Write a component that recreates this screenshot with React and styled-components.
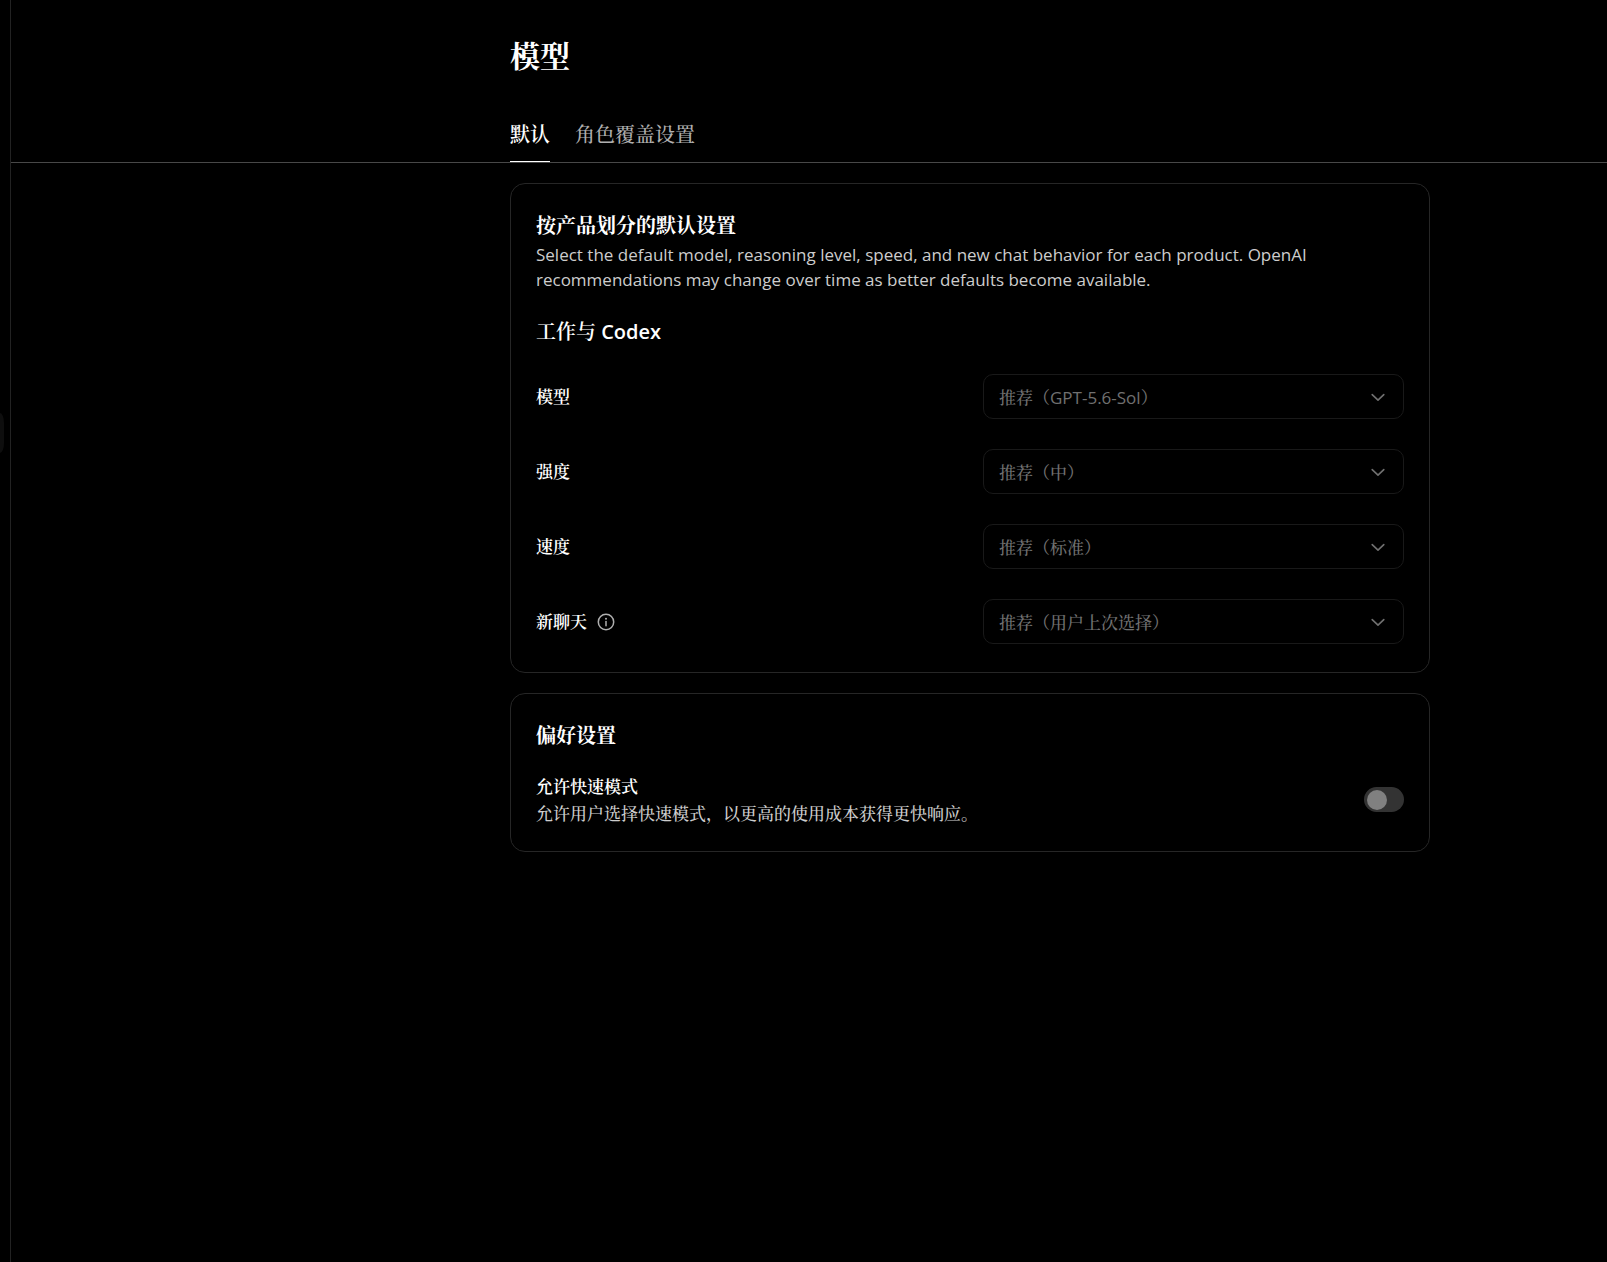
import React, { useState } from "react";
import styled, { createGlobalStyle } from "styled-components";

const GlobalStyle = createGlobalStyle`
  *, *::before, *::after { box-sizing: border-box; }
  html { background: #000; }
  body {
    margin: 0;
    background: #000;
    color: #fff;
    font-family: "Open Sans", "Noto Serif CJK SC", "Noto Sans CJK SC", sans-serif;
  }
  h1, h2, h3, p { margin: 0; }
  button, select { font-family: inherit; }
`;

const Page = styled.div`
  display: flex;
  min-height: 100vh;
`;

const Rail = styled.aside`
  display: flex;
  flex: none;
  align-items: flex-start;
  width: 11px;
  padding-top: 413px;
  border-right: 1px solid #222;
`;

const RailHandle = styled.button`
  width: 4px;
  height: 40px;
  padding: 0;
  border: 0;
  border-radius: 0 4px 4px 0 / 0 10px 10px 0;
  background: #0e0e0e;
`;

const Main = styled.main`
  flex: 1;
  min-width: 0;
`;

const Band = styled.div`
  padding-left: 322px;
  border-bottom: ${(p) => (p.$ruled ? "1px solid #484848" : "0")};
`;

const Column = styled.div`
  display: flex;
  flex-direction: column;
  gap: ${(p) => p.$gap}px;
  max-width: 920px;
  margin: 0 auto;
  padding-top: ${(p) => p.$top}px;
`;

const PageTitle = styled.h1`
  font-size: 30px;
  font-weight: 700;
  line-height: 40px;
`;

const Tabs = styled.nav`
  display: flex;
  gap: 25px;
`;

const Tab = styled.button`
  height: 54px;
  padding: 0;
  border: 0;
  border-bottom: 1px solid ${(p) => (p.$active ? "#fff" : "transparent")};
  background: none;
  color: ${(p) => (p.$active ? "#fff" : "#afafaf")};
  font-size: 20px;
  font-weight: ${(p) => (p.$active ? 600 : 500)};
  line-height: 30px;
`;

const Card = styled.section`
  padding: 27px 25px ${(p) => p.$bottom}px;
  border: 1px solid #262626;
  border-radius: 15px;
`;

const Title = styled.h2`
  font-size: 20px;
  font-weight: 700;
  line-height: 30px;
`;

const Subtitle = styled.h3`
  margin: 25px 0 27px;
  font-size: 20px;
  font-weight: 600;
  line-height: 30px;
`;

const Intro = styled.p`
  max-width: 780px;
  margin-top: 1px;
  color: #cdcdcd;
  font-size: 17px;
  line-height: 25px;
`;

const Fields = styled.div`
  display: grid;
  gap: 30px;
`;

const Field = styled.div`
  display: grid;
  grid-template-columns: 1fr 1fr;
  gap: 26px;
  align-items: center;
`;

const LabelGroup = styled.div`
  display: flex;
  align-items: center;
  gap: 10px;
`;

const Label = styled.label`
  display: block;
  font-size: 17px;
  font-weight: 600;
  line-height: 28px;
`;

const InfoButton = styled.button`
  display: flex;
  padding: 0;
  border: 0;
  background: none;
  color: #afafaf;
`;

const SelectBox = styled.div`
  display: grid;
  align-items: center;
  color: #707070;

  & > * { grid-area: 1 / 1; }
  & > svg {
    justify-self: end;
    margin-right: 16px;
    pointer-events: none;
  }
`;

const Select = styled.select`
  width: 100%;
  height: 45px;
  padding: 1px 45px 0 15px;
  appearance: none;
  border: 1px solid #191919;
  border-radius: 10px;
  background: #000;
  color: inherit;
  font-size: 17px;
  font-weight: 500;
  opacity: 1;
`;

const Preference = styled.div`
  display: flex;
  align-items: center;
  justify-content: space-between;
  margin-top: 22px;
`;

const Note = styled.p`
  color: #cdcdcd;
  font-size: 17px;
  font-weight: 500;
  line-height: 25px;
`;

const Switch = styled.input`
  display: flex;
  align-items: center;
  flex: none;
  width: 40px;
  height: 25px;
  margin: 0;
  padding: 0 3px;
  appearance: none;
  border-radius: 13px;
  background: #333;

  &::before {
    content: "";
    width: 20px;
    height: 20px;
    border-radius: 50%;
    background: #808080;
  }
`;

const Chevron = () => (
  <svg width="20" height="20" viewBox="0 0 20 20" fill="none" stroke="currentColor" strokeWidth="1.6" strokeLinecap="round" strokeLinejoin="round" aria-hidden="true">
    <path d="M4.2 7.6 10 13.2 15.8 7.6" />
  </svg>
);

const InfoIcon = () => (
  <svg width="18" height="18" viewBox="0 0 18 18" fill="none" aria-hidden="true">
    <circle cx="9" cy="9" r="7.7" stroke="currentColor" strokeWidth="1.5" />
    <circle cx="9" cy="5.7" r="1" fill="currentColor" />
    <path d="M9 8.4v4.3" stroke="currentColor" strokeWidth="1.5" strokeLinecap="round" />
  </svg>
);

const tabs = ["默认", "角色覆盖设置"];

const fields = [
  { id: "model", label: "模型", value: "推荐（GPT-5.6-Sol）" },
  { id: "effort", label: "强度", value: "推荐（中）" },
  { id: "speed", label: "速度", value: "推荐（标准）" },
  { id: "new-chat", label: "新聊天", value: "推荐（用户上次选择）", info: true },
];

export default function App() {
  const [active, setActive] = useState(0);

  return (
    <Page lang="zh-CN">
      <GlobalStyle />
      <Rail>
        <RailHandle type="button" />
      </Rail>
      <Main>
        <Band $ruled>
          <Column $top={36} $gap={32}>
            <PageTitle>模型</PageTitle>
            <Tabs>
              {tabs.map((name, i) => (
                <Tab key={name} type="button" $active={i === active} onClick={() => setActive(i)}>
                  {name}
                </Tab>
              ))}
            </Tabs>
          </Column>
        </Band>
        <Band>
          <Column $top={20} $gap={20}>
            <Card $bottom={28}>
              <Title>按产品划分的默认设置</Title>
              <Intro>
                Select the default model, reasoning level, speed, and new chat behavior for each
                product. OpenAI recommendations may change over time as better defaults become
                available.
              </Intro>
              <Subtitle>工作与 Codex</Subtitle>
              <Fields>
                {fields.map((f) => (
                  <Field key={f.id}>
                    <LabelGroup>
                      <Label htmlFor={f.id}>{f.label}</Label>
                      {f.info && (
                        <InfoButton type="button">
                          <InfoIcon />
                        </InfoButton>
                      )}
                    </LabelGroup>
                    <SelectBox>
                      <Select id={f.id} disabled>
                        <option>{f.value}</option>
                      </Select>
                      <Chevron />
                    </SelectBox>
                  </Field>
                ))}
              </Fields>
            </Card>
            <Card $bottom={25}>
              <Title>偏好设置</Title>
              <Preference>
                <div>
                  <Label htmlFor="fast-mode">允许快速模式</Label>
                  <Note>允许用户选择快速模式，以更高的使用成本获得更快响应。</Note>
                </div>
                <Switch id="fast-mode" type="checkbox" role="switch" disabled />
              </Preference>
            </Card>
          </Column>
        </Band>
      </Main>
    </Page>
  );
}
